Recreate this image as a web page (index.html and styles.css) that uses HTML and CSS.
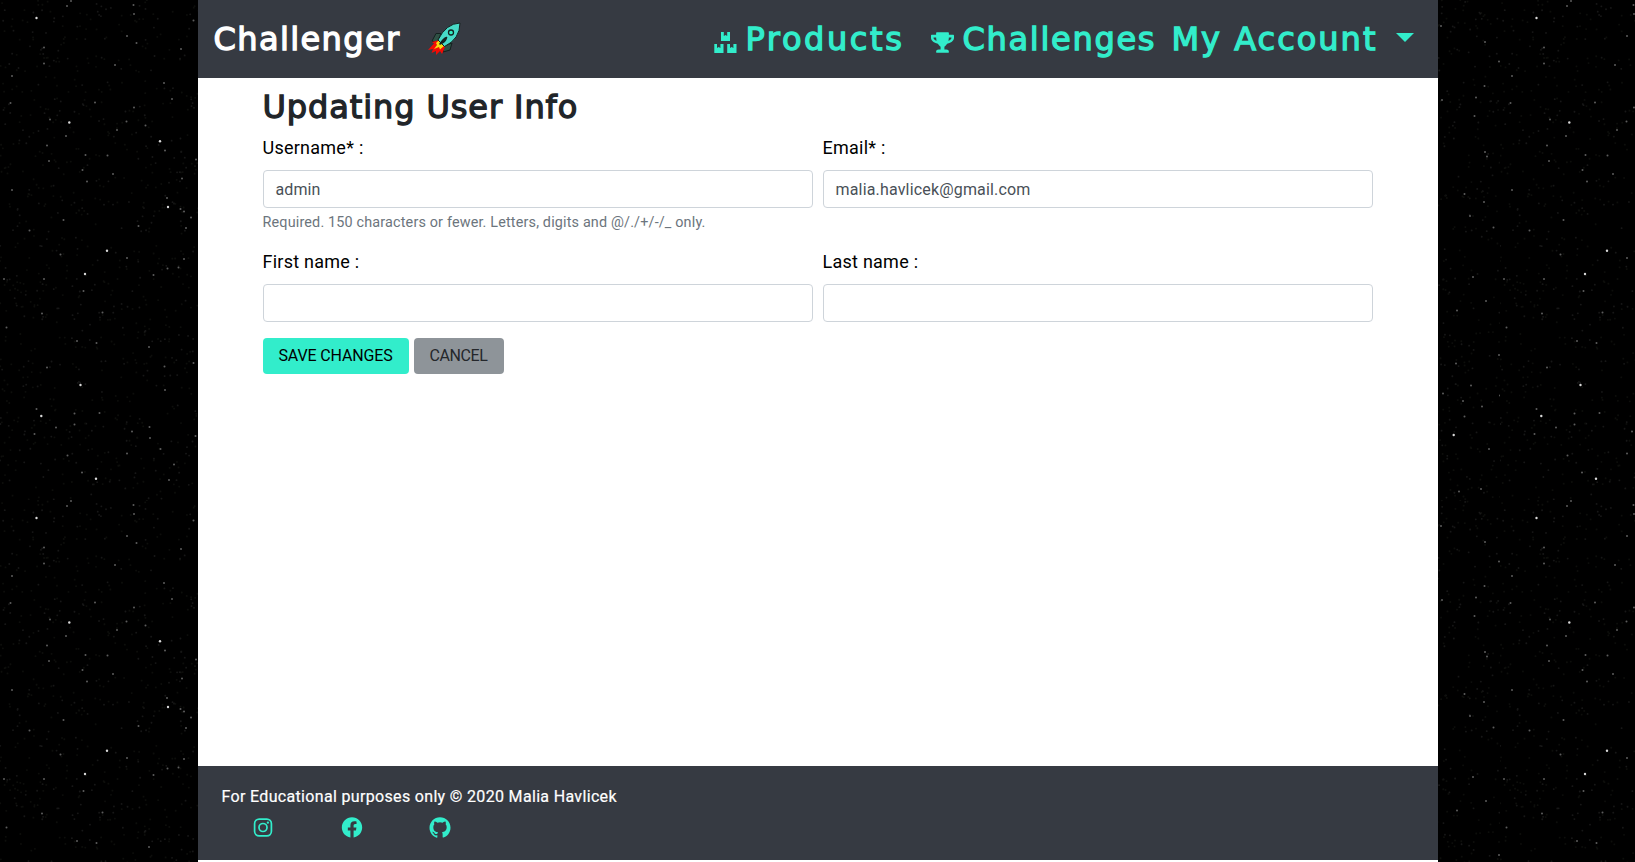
FILE: index.html
```
<!DOCTYPE html>
<html lang="en">
<head>
<meta charset="utf-8">
<title>Challenger</title>
<link rel="stylesheet" href="styles.css">
</head>
<body>
<svg class="sky" aria-hidden="true">
  <defs><pattern id="stars" width="500" height="500" patternUnits="userSpaceOnUse"></pattern></defs>
  <rect width="100%" height="100%" fill="url(#stars)"/>
</svg>
<div class="page">
  <header class="navbar">
    <a class="brand">Challenger</a>
    <svg class="rocket" viewBox="0 0 60 50">
      <g stroke="#14211f" stroke-width="1" stroke-linejoin="round">
        <path d="M26 18.500h-5l-4 7.500 5 1.500z" fill="#2f5145"/>
        <path d="M29 31l-1 6 7-2 2-7z" fill="#2f5145"/>
        <path d="M24 25l-7 2 2 1.500-6 6.500 5-1-1.500 4 4.500-2 0 4 4-4 2 3 3-7z" fill="#f30b05" stroke="none"/>
        <path d="M24 25l-3 3 1 2-3 4 5-2 1 2.500 4-3.500z" fill="#f5dc13" stroke="none"/>
        <path d="M45 8q-14 .5-22 17l6.500 6.500Q45 24 45 8z" fill="#47dac7"/>
        <path d="M31.500 22.500q-3 1-6.500 6.500 5.500-2 6.500-6.500z" fill="#2f5145" stroke-width="1.600"/>
        <circle cx="36" cy="17.500" r="2.500" fill="#32edc1" stroke-width="1.300"/>
      </g>
    </svg>
    <nav class="links">
      <a class="link"><svg class="link-icon" viewBox="0 0 23 21"><path d="M7 0h2.800v4l1.700-1 1.700 1V0H16v9H7zM.3 12H3v4l1.700-1 1.700 1v-4h3.100v9H.3zM13.200 12H16v4l1.700-1 1.700 1v-4h3.100v9h-9.300z"/></svg><span class="products">Products</span></a>
      <a class="link"><svg class="link-icon" viewBox="0 0 576 512"><path d="M552 64H448V24c0-13.300-10.700-24-24-24H152c-13.300 0-24 10.700-24 24v40H24C10.700 64 0 74.700 0 88v56c0 35.700 22.500 72.400 61.900 100.700 31.500 22.700 69.800 37.100 110 41.700C203.300 338.500 240 360 240 360v72h-48c-35.300 0-64 20.700-64 56v12c0 6.600 5.400 12 12 12h296c6.600 0 12-5.400 12-12v-12c0-35.300-28.700-56-64-56h-48v-72s36.700-21.500 68.100-73.600c40.300-4.600 78.600-19 110-41.700 39.300-28.300 61.900-65 61.900-100.700V88c0-13.300-10.700-24-24-24zM99.300 192.800C74.900 175.200 64 155.600 64 144v-16h64.200c1 32.600 5.800 61.200 12.800 86.200-15.100-5.200-29.200-12.400-41.700-21.400zM512 144c0 16.100-17.700 36.100-35.300 48.800-12.500 9-26.700 16.200-41.800 21.400 7-25 11.800-53.600 12.800-86.200H512z"/></svg><span class="challenges">Challenges</span></a>
      <a class="link"><span class="account">My Account</span><i class="caret"></i></a>
    </nav>
  </header>
  <main class="content">
    <h1 class="title">Updating User Info</h1>
    <form class="form">
      <div class="field"><label class="label">Username* :</label><div class="input">admin</div><small class="help">Required. 150 characters or fewer. Letters, digits and @/./+/-/_ only.</small></div>
      <div class="field"><label class="label">Email* :</label><div class="input email">malia.havlicek@gmail.com</div></div>
      <div class="field"><label class="label">First name :</label><div class="input"></div></div>
      <div class="field"><label class="label">Last name :</label><div class="input"></div></div>
    </form>
    <div class="actions"><button class="btn save">SAVE CHANGES</button><button class="btn cancel">CANCEL</button></div>
  </main>
  <footer class="footer">
    <p class="note">For Educational purposes only © 2020 Malia Havlicek</p>
    <div class="social">
      <svg class="social-icon" viewBox="0 0 22 22"><g fill="none" stroke="#32edcb" stroke-width="1.800"><rect x="2.200" y="2.200" width="17.600" height="17.600" rx="4.800"/><circle cx="11" cy="11" r="4.200"/></g><circle cx="16.100" cy="5.900" r="1.200"/></svg>
      <svg class="social-icon" viewBox="0 0 512 512"><path d="M504 256C504 119 393 8 256 8S8 119 8 256c0 123.800 90.700 226.400 209.300 245V327.700h-63V256h63v-54.600c0-62.200 37-96.500 93.700-96.500 27.100 0 55.500 4.800 55.500 4.800v61h-31.300c-30.800 0-40.400 19.100-40.400 38.700V256h68.800l-11 71.700h-57.800V501C413.300 482.400 504 379.800 504 256z"/></svg>
      <svg class="social-icon" viewBox="0 0 16 16"><path d="M8 .2C3.600.2 0 3.800 0 8.200c0 3.500 2.300 6.500 5.500 7.600.4.100.5-.2.500-.4v-1.500c-2 .4-2.500-.5-2.700-.9-.1-.2-.5-.9-.8-1.100-.3-.2-.7-.6 0-.6.600 0 1.100.6 1.200.8.700 1.200 1.900.9 2.300.7.100-.5.300-.9.500-1.100-1.800-.2-3.600-.9-3.600-4 0-.9.300-1.600.8-2.100-.1-.200-.4-1 .1-2.100 0 0 .7-.2 2.200.8a7.500 7.500 0 0 1 4 0c1.500-1 2.200-.8 2.200-.8.400 1.100.2 1.900.1 2.100.5.600.8 1.300.8 2.100 0 3.100-1.900 3.700-3.600 3.900.3.300.5.800.5 1.500v2.200c0 .2.100.5.500.4 3.200-1.100 5.500-4.100 5.500-7.600 0-4.400-3.600-7.900-8-7.900z"/></svg>
    </div>
  </footer>
</div>
<script src="sky.js"></script>
</body>
</html>
```

FILE: styles.css
```
* { box-sizing: border-box; }
body { margin: 0; background: #000; font-family: Roboto, sans-serif; font-size: 16px; line-height: 24px; color: #212529; }
.sky { position: absolute; inset: 0; width: 100%; height: 862px; }
.page { position: relative; width: 1240px; height: 862px; margin: 0 auto; background: #fff; display: flex; flex-direction: column; overflow: hidden; }
.navbar { flex: none; height: 78px; background: #363a42; display: flex; align-items: center; padding: 0 24px 0 16px; font: 32px/48px "DejaVu Sans", sans-serif; }
.brand { color: #fff; letter-spacing: 1.400px; width: 201px; white-space: nowrap; -webkit-text-stroke: 1.300px #fff; }
.rocket { width: 60px; height: 50px; margin-top: 2px; }
.links { margin-left: auto; display: flex; color: #32edcb; -webkit-text-stroke: 1.300px #32edcb; white-space: nowrap; }
.link { display: flex; align-items: center; }
.link-icon { width: 23px; height: 21px; margin: 7px 9px 0 0; fill: #32edcb; }
.products { width: 185px; letter-spacing: 2.600px; }
.challenges { width: 209px; letter-spacing: 1.700px; }
.account { width: 224px; letter-spacing: 2px; }
.caret { border: 9.600px solid transparent; border-top-color: #32edcb; border-bottom: 0; margin-top: -3px; }
.content { flex: 1; padding: 8px 65px; }
.title { margin: 0; padding-top: 2px; font: 32px/38px "DejaVu Sans", sans-serif; letter-spacing: .9px; -webkit-text-stroke: 1.300px #212529; }
.form { display: grid; grid-template-columns: 1fr 1fr; column-gap: 10px; }
.field { height: 114px; padding-top: 8px; }
.field:nth-child(n+3) { height: 98px; }
.label { display: block; height: 36px; font-size: 18px; line-height: 27px; letter-spacing: .25px; color: #000; }
.input { height: 38px; border: 1px solid #ced4da; border-radius: 4px; padding: 7px 12px 5px; color: #495057; letter-spacing: .1px; }
.email { letter-spacing: .17px; }
.help { display: block; margin-top: 4px; font-size: 14.400px; line-height: 21px; letter-spacing: .16px; color: #6c757d; }
.actions { display: flex; gap: 5px; }
.btn { height: 36px; padding: 0; border: 0; border-radius: 4px; font: 16px/24px Roboto, sans-serif; }
.save { width: 146px; background: #32edcb; color: #000; letter-spacing: -.15px; }
.cancel { width: 90px; background: #8e9499; color: #24272b; letter-spacing: -.4px; }
.footer { flex: none; height: 94px; margin-bottom: 2px; padding: 19px 24px 0; background: #363a42; color: #fff; }
.note { margin: 0; letter-spacing: .33px; -webkit-text-stroke: .2px #fff; }
.social { display: flex; gap: 66.700px; padding: 8px 0 0 30.500px; }
.social-icon { width: 22px; height: 21px; fill: #32edcb; }
```

FILE: sky.js
```
// Star positions inside one 500x500 tile, as x,y pairs.
const bright = [36.5,18, 69.3,122.5, 160,141.3, 168,207, 107,250.7, 85,274, 80.5,385, 41.3,416, 453.7,435, 96,478.7];
const medium = [44,47.5, 44,63.5, 12,76, 115,65, 127,36, 136.5,43, 133.5,5, 134,14, 67,6, 71,1, 193.5,20.5, 181,49, 164,83, 172,99,
  134,107.5, 95,102.5, 10.5,103, 50,119.5, 66,136, 47,145.5, 49,161, 85.5,155, 107.5,155.5, 117,130, 126.5,121.5, 145.5,125.5,
  165,150.5, 196,159.5, 82.5,170, 113,174, 87,181.5, 12,190, 182,178.5, 167,198, 180.5,209, 184,211.5, 191,217.5, 186,228,
  138.5,226, 29.5,230.5, 63.5,220, 60.5,254.5, 127,258, 184,259, 178.5,267.5, 167.5,268.5, 153.5,275, 4,279, 44,279, 83.5,291,
  42,313.5, 102.5,312.5, 6.5,327.5, 77,341, 96.5,343, 149,347, 47,367.5, 164.5,366.5, 193.5,363, 165,390, 36.5,409, 74.5,413.5,
  99.5,413, 74.5,424.5, 56,427.5, 149.5,427, 34.5,434, 132,431.5, 150,438, 195.5,436, 160.5,449, 127,453.5, 67.5,455.5,
  174,464.5, 82,472.5, 169,480, 441,26, 485,42, 499,61.5, 484.5,86, 476,97.5, 442,100, 474.5,116, 485,152, 487,156.5,
  464.5,194, 484,202, 470,216, 493.5,227.5, 473,277, 486,301, 457,310.5, 499,355, 456,363.5, 471,385.5, 500,395.5,
  443,393.5, 463,401, 482,406.5, 464.5,416.5, 489,449, 459,491.5, 481,489];
const tile = document.getElementById('stars');
function star(x, y, r, fill) {
  const c = document.createElementNS('http://www.w3.org/2000/svg', 'circle');
  c.setAttribute('cx', x);
  c.setAttribute('cy', y);
  c.setAttribute('r', r);
  c.setAttribute('fill', fill);
  tile.appendChild(c);
}
// Faint dust from a fixed-seed generator.
let seed = 7;
const next = () => (seed = (seed * 16807) % 2147483647) / 2147483647;
for (let i = 0; i < 2200; i++) star(next() * 500, next() * 500, 0.9, i % 3 ? '#0d0e0b' : '#171717');
for (let i = 0; i < medium.length; i += 2) star(medium[i], medium[i + 1], 1, '#5c5c5c');
for (let i = 0; i < bright.length; i += 2) star(bright[i], bright[i + 1], 1.2, '#d8d8d8');
```
